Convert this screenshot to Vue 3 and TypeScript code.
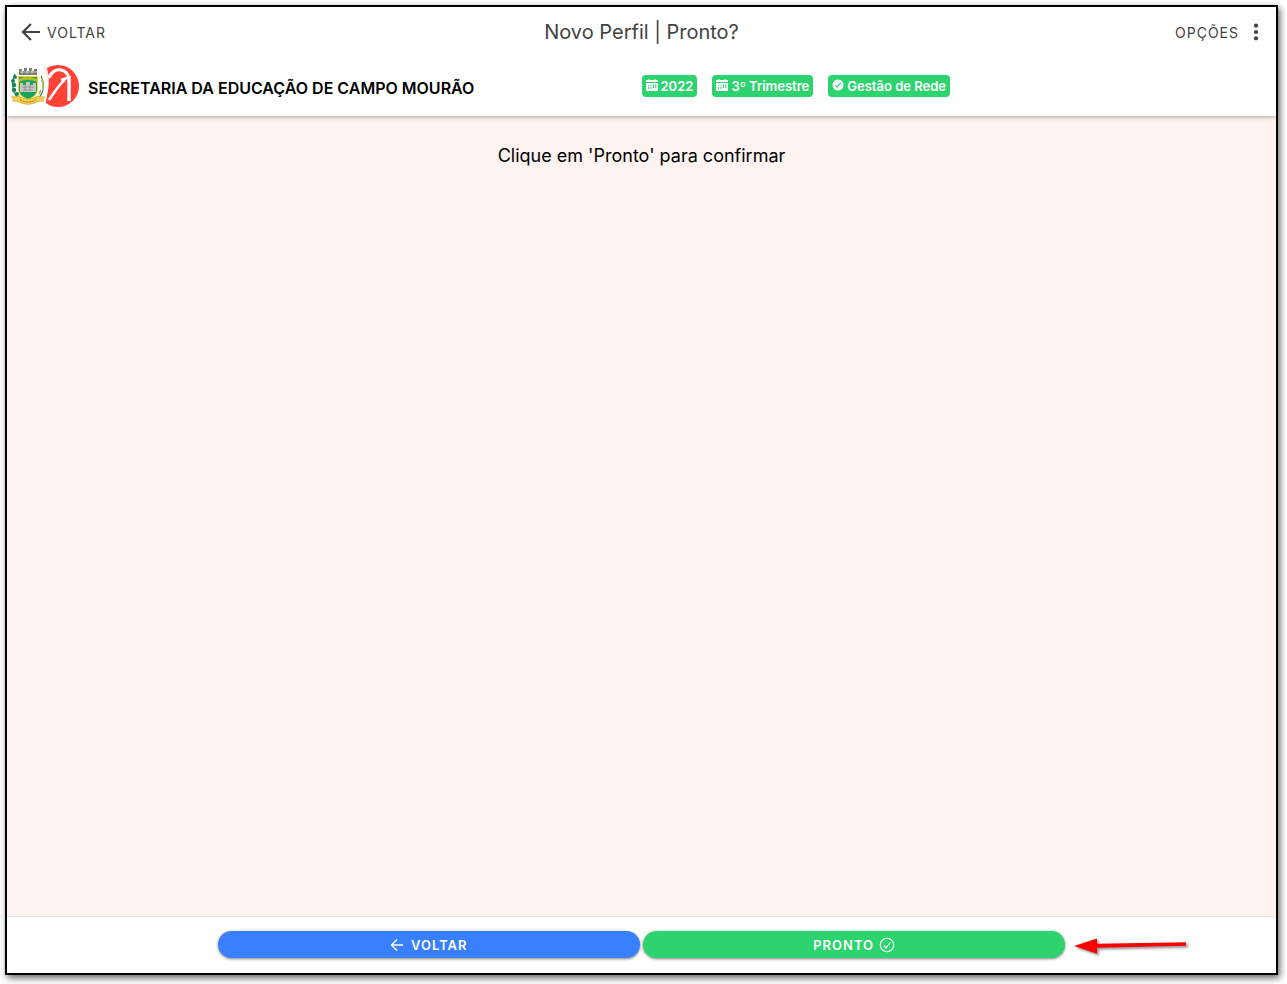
<script setup lang="ts">
interface Badge {
  label: string
  icon: 'calendar' | 'check'
}

const badges: Badge[] = [
  { label: '2022', icon: 'calendar' },
  { label: '3º Trimestre', icon: 'calendar' },
  { label: 'Gestão de Rede', icon: 'check' },
]
</script>

<template>
  <div class="window">
    <header class="header">
      <div class="toolbar">
        <button type="button" class="tool back">
          <svg class="back-icon" viewBox="0 0 20 20" aria-hidden="true">
            <path d="M10 2 2 10l8 8M2.500 10H19" fill="none" stroke="currentColor" stroke-width="2.200" />
          </svg>
          VOLTAR
        </button>
        <h1 class="title">Novo Perfil | Pronto?</h1>
        <button type="button" class="tool options">
          OPÇÕES
          <svg class="dots" viewBox="0 0 6 18" aria-hidden="true">
            <circle cx="3" cy="2.700" r="2.100" />
            <circle cx="3" cy="9" r="2.100" />
            <circle cx="3" cy="15.300" r="2.100" />
          </svg>
        </button>
      </div>
      <div class="context">
        <div class="entity">
          <svg class="logo" viewBox="0 0 70 44" aria-hidden="true">
            <circle cx="48" cy="22" r="21" fill="#ff4136" />
            <path d="M24 0h11q3 6 4 13 0 10-2 19l-2 12H24z" fill="#fff" />
            <path d="M34 3q5 6 4 15M35 38l3 2" fill="none" stroke="#ff8b83" stroke-width="0.800" stroke-dasharray="1 1" />
            <path d="M39 14C41 8 46 5 51 6c5 1 7 4 8 8" fill="none" stroke="#fff" stroke-width="3" />
            <path d="M55 16C50 19 46 26 39 36M51 16l9-3" fill="none" stroke="#fff" stroke-width="2.600" />
            <path d="M59 12v25" fill="none" stroke="#fff" stroke-width="3.400" />
            <path d="M9 5h3v2h2V4h3v3h2V4h3v3h2V5h3v6H9z" fill="#77796f" />
            <path d="M10 8h17M12 6v4M17 5v5M22 5v5" stroke="#d8d8d0" stroke-width="0.800" />
            <path d="M8 12h20v13c0 6-5 9-10 11-5-2-10-5-10-11z" fill="#f2d43a" />
            <path d="M9 13h18v12c0 5-4 8-9 10-5-2-9-5-9-10z" fill="#18a45a" />
            <path d="M9 15q9-5 18 0v3q-9-4-18 0z" fill="#a8ba34" />
            <path d="M10 19h3v2h3v-3h4v3h3v-2h3v9H10z" fill="#c5c9c1" />
            <path d="M12 23h12M13 26h10M15 20v7M20 20v7" stroke="#849087" stroke-width="0.800" />
            <path d="M5 10C1 19 2 29 10 36M31 12c4 8 3 17-4 24" fill="none" stroke="#178653" stroke-width="1.200" />
            <g fill="#178653">
              <circle cx="5" cy="13" r="1.900" /><circle cx="3" cy="17" r="2" />
              <circle cx="4" cy="21" r="2.200" /><circle cx="4" cy="26" r="2.200" /><circle cx="7" cy="30" r="2" />
            </g>
            <path d="M32 14v4M33 20v4M31 26l-2 4" stroke="#d6b534" stroke-width="1.800" />
            <path d="M1 33l8-1q9 6 18 0l8 1-2 2 1 2q-6 0-9 2-7 3-14 0-4-2-9-2l2-2z" fill="#f1cd4d" stroke="#c49f2a" stroke-width="0.500" />
            <path d="M10 36q8 4 16 0" fill="none" stroke="#8e7b30" stroke-width="1" stroke-dasharray="2 1" />
          </svg>
          <h2 class="entity-name">SECRETARIA DA EDUCAÇÃO DE CAMPO MOURÃO</h2>
        </div>
        <ul class="badges">
          <li v-for="badge in badges" :key="badge.label" class="badge">
            <svg v-if="badge.icon === 'calendar'" class="badge-icon" viewBox="0 0 12 12" aria-hidden="true">
              <path d="M1 1h1.500V0h1v1h5V0h1v1H11q1 0 1 1v1H0V2q0-1 1-1zM0 4h12v7q0 1-1 1H1q-1 0-1-1z" fill="currentColor" />
              <path d="M2.500 6v1M2.500 8v2M5 6v1M5 8v2M7.500 5.500V9M9.800 5v4" stroke="#2dd36f" stroke-width="1" />
            </svg>
            <svg v-else class="badge-icon" viewBox="0 0 12 12" aria-hidden="true">
              <circle cx="6" cy="6" r="5.500" fill="currentColor" />
              <path d="m3.300 6.200 1.800 2 3.600-4.500" fill="none" stroke="#2dd36f" stroke-width="1.100" />
            </svg>
            {{ badge.label }}
          </li>
        </ul>
      </div>
    </header>

    <main class="content">
      <p class="message">Clique em 'Pronto' para confirmar</p>
    </main>

    <footer class="footer">
      <button type="button" class="action primary">
        <svg class="action-arrow" viewBox="0 0 14 14" aria-hidden="true">
          <path d="M7 1.500 1.500 7 7 12.500M1.500 7H13" fill="none" stroke="currentColor" stroke-width="1.400" />
        </svg>
        VOLTAR
      </button>
      <div class="confirm">
        <button type="button" class="action success">
          PRONTO
          <svg class="action-check" viewBox="0 0 16 16" aria-hidden="true">
            <circle cx="8" cy="8" r="6.700" fill="none" stroke="currentColor" stroke-width="1.100" />
            <path d="m4.800 8.500 2.200 2.300 4.300-5.300" fill="none" stroke="currentColor" stroke-width="1.100" />
          </svg>
        </button>
        <svg class="pointer" viewBox="0 0 120 24" aria-hidden="true">
          <path d="M1 12 24 4.500v5.300l89-1.500v3.400l-89 2v6z" fill="#f00" />
        </svg>
      </div>
    </footer>
  </div>
</template>

<style>
body {
  margin: 0;
  background: #fff;
}
</style>

<style scoped>
.window {
  box-sizing: border-box;
  display: flex;
  flex-direction: column;
  min-height: calc(100vh - 14px);
  margin: 5px 9px 9px 5px;
  border: 2px solid #000;
  background: #fff;
  box-shadow: 2px 3px 7px rgba(0, 0, 0, 0.6);
  color: #000;
  font-family: Inter, "Open Sans", sans-serif;
}

button {
  border: 0;
  font-family: inherit;
  cursor: pointer;
}

.header {
  position: relative;
  background: #fff;
  box-shadow: 0 1px 4px rgba(0, 0, 0, 0.35);
}

.toolbar {
  display: grid;
  grid-template-columns: 1fr auto 1fr;
  align-items: center;
  height: 50px;
  padding: 0 14px;
  color: #424242;
}

.tool {
  display: flex;
  align-items: center;
  padding: 0;
  background: none;
  color: inherit;
  font-size: 14px;
  letter-spacing: 1px;
}

.back {
  justify-self: start;
  gap: 6px;
}

.back-icon {
  width: 20px;
  height: 20px;
}

.options {
  justify-self: end;
  gap: 14px;
  padding-right: 3px;
}

.dots {
  width: 6px;
  height: 18px;
  fill: currentColor;
}

.title {
  margin: 0;
  font-size: 20px;
  font-weight: 400;
  line-height: 24px;
}

.context {
  display: grid;
  grid-template-columns: 1fr 1fr;
  height: 59px;
}

.entity {
  display: flex;
  align-items: center;
  gap: 8px;
  height: 58px;
  padding-left: 3px;
}

.logo {
  flex: none;
  width: 70px;
  height: 44px;
}

.entity-name {
  margin: 4px 0 0;
  font-size: 16px;
  font-weight: 600;
  line-height: 20px;
  white-space: nowrap;
}

.badges {
  display: flex;
  align-items: flex-start;
  gap: 15px;
  margin: 0;
  padding: 18px 0 0;
  list-style: none;
}

.badge {
  display: flex;
  align-items: center;
  gap: 3px;
  height: 22px;
  padding: 0 4px;
  border-radius: 4px;
  background: #2dd36f;
  color: #fff;
  font-size: 13px;
  font-weight: 600;
  white-space: nowrap;
}

.badge-icon {
  width: 12px;
  height: 12px;
  margin-bottom: 3px;
}

.content {
  flex: 1;
  background: #fdf3f1;
}

.message {
  margin: 28px 0 0;
  font-size: 18px;
  line-height: 24px;
  text-align: center;
}

.footer {
  display: grid;
  grid-template-columns: 1fr 1fr;
  gap: 3px;
  padding: 14px 16.600% 15px;
  border-top: 1px solid #e8dddd;
}

.action {
  display: flex;
  align-items: center;
  justify-content: center;
  width: 100%;
  height: 27px;
  padding: 0;
  border-radius: 14px;
  box-shadow: 0 1px 3px rgba(0, 0, 0, 0.5);
  color: #fff;
  font-size: 13px;
  font-weight: 600;
  letter-spacing: 1px;
}

.primary {
  gap: 7px;
  background: #3880ff;
}

.success {
  gap: 5px;
  background: #2dd36f;
}

.action-arrow {
  width: 14px;
  height: 14px;
}

.action-check {
  width: 16px;
  height: 16px;
}

.confirm {
  position: relative;
}

.pointer {
  position: absolute;
  top: 3px;
  left: calc(100% + 8px);
  width: 120px;
  height: 24px;
  filter: drop-shadow(2px 2px 1px rgba(0, 0, 0, 0.4));
}
</style>
